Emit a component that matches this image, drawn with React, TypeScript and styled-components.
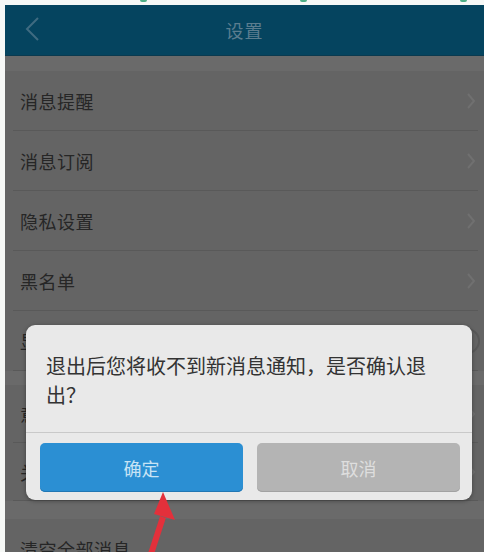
import React from "react";
import styled, { createGlobalStyle } from "styled-components";

const Global = createGlobalStyle`
  html, body { margin: 0; padding: 0; background: #f6f8f6; }
  body { font-family: "Noto Sans CJK SC", "Noto Sans", sans-serif; }
  #root { width: 484px; height: 552px; overflow: hidden; }
`;

const Page = styled.div`
  width: 484px;
  height: 552px;
  display: flex;
  flex-direction: column;
  background: #f6f8f6;
  overflow: hidden;
`;

const TopStrip = styled.div`
  height: 5px;
  flex: none;
  display: flex;
  gap: 153px;
  padding-left: 140px;
`;

const GreenBit = styled.span`
  width: 7px;
  height: 2px;
  background: #4fae86;
  border-radius: 0 0 2px 2px;
`;

const Body = styled.div`
  flex: 1;
  display: flex;
  padding-left: 5px;
  min-height: 0;
`;

const Screen = styled.div`
  position: relative;
  flex: 1;
  display: flex;
  flex-direction: column;
  background: #646464;
  overflow: hidden;
`;

const Header = styled.div`
  height: 50px;
  flex: none;
  background: #05445f;
  display: flex;
  align-items: center;
  justify-content: center;
  position: relative;
  border-bottom: 1px solid #0b3a4f;
`;

const Back = styled.svg`
  position: absolute;
  left: 19px;
  top: 11px;
`;

const Title = styled.div`
  color: #5b7d8f;
  font-size: 18px;
  letter-spacing: 1px;
`;

const Band = styled.div<{ h: number }>`
  height: ${(p) => p.h}px;
  flex: none;
  background: #6a6a6a;
`;

const Row = styled.div<{ h?: number }>`
  height: ${(p) => p.h ?? 60}px;
  flex: none;
  display: flex;
  align-items: center;
  justify-content: space-between;
  padding: 0 8px 0 15px;
  box-sizing: border-box;
  position: relative;
  &::after {
    content: "";
    position: absolute;
    left: 8px;
    right: 6px;
    bottom: 0;
    height: 1px;
    background: #595959;
  }
`;

const Label = styled.span`
  color: #262626;
  font-size: 18px;
  letter-spacing: 0.5px;
`;

const Toggle = styled.span`
  width: 46px;
  height: 26px;
  border: 2px solid #585858;
  border-radius: 15px;
  box-sizing: border-box;
  margin-right: -4px;
`;

const Chevron = () => (
  <svg width="10" height="18" viewBox="0 0 10 18">
    <path d="M2 2 L8 9 L2 16" fill="none" stroke="#707070" strokeWidth="2" />
  </svg>
);

const Dialog = styled.div`
  position: absolute;
  left: 21px;
  top: 320px;
  width: 446px;
  height: 175px;
  background: #e9e9e9;
  border-radius: 9px;
  box-shadow: 0 1px 4px rgba(0, 0, 0, 0.35);
  display: flex;
  flex-direction: column;
  overflow: hidden;
`;

const Message = styled.div`
  height: 108px;
  box-sizing: border-box;
  padding: 26px 18px 0 20px;
  font-size: 20px;
  line-height: 29px;
  color: #333333;
  border-bottom: 1px solid #c9c9c9;
`;

const Buttons = styled.div`
  flex: 1;
  display: flex;
  gap: 14px;
  padding: 10px 12px 8px 14px;
`;

const Btn = styled.div<{ primary?: boolean }>`
  flex: 1;
  border-radius: 5px;
  display: flex;
  align-items: center;
  justify-content: center;
  font-size: 18px;
  background: ${(p) => (p.primary ? "#2b8fd3" : "#b4b4b4")};
  color: ${(p) => (p.primary ? "#c7e3f5" : "#dedede")};
  box-shadow: inset 0 -1px 0 ${(p) => (p.primary ? "#2277b3" : "#a2a2a2")};
`;

const Arrow = styled.svg`
  position: absolute;
  left: 130px;
  top: 485px;
`;

export default function App() {
  return (
    <Page>
      <Global />
      <TopStrip>
        <GreenBit />
        <GreenBit />
        <GreenBit />
      </TopStrip>
      <Body>
        <Screen>
          <Header>
            <Back width="16" height="26" viewBox="0 0 16 26">
              <path d="M14 2 L3 13 L14 24" fill="none" stroke="#3f6b81" strokeWidth="2" />
            </Back>
            <Title>设置</Title>
          </Header>
          <Band h={15} />
          <Row>
            <Label>消息提醒</Label>
            <Chevron />
          </Row>
          <Row>
            <Label>消息订阅</Label>
            <Chevron />
          </Row>
          <Row>
            <Label>隐私设置</Label>
            <Chevron />
          </Row>
          <Row>
            <Label>黑名单</Label>
            <Chevron />
          </Row>
          <Row>
            <Label>显示在线状态</Label>
            <Toggle />
          </Row>
          <Band h={14} />
          <Row h={58}>
            <Label>意见反馈</Label>
            <Chevron />
          </Row>
          <Row h={58}>
            <Label>关于我们</Label>
            <Chevron />
          </Row>
          <Band h={18} />
          <Row>
            <Label>清空全部消息</Label>
          </Row>
          <Dialog>
            <Message>退出后您将收不到新消息通知，是否确认退出？</Message>
            <Buttons>
              <Btn primary>确定</Btn>
              <Btn>取消</Btn>
            </Buttons>
          </Dialog>
          <Arrow width="50" height="70" viewBox="0 0 50 70">
            <path d="M14 70 L28 27" stroke="#e3303b" strokeWidth="6" fill="none" />
            <polygon points="28,2 40,30 19,24" fill="#e3303b" />
          </Arrow>
        </Screen>
      </Body>
    </Page>
  );
}
